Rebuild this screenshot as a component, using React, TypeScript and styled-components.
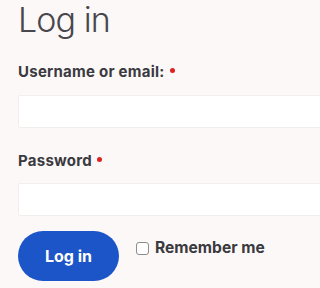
import React from 'react';
import styled, { createGlobalStyle } from 'styled-components';

const TEXT = '#3a3a3f';
const BLUE = '#1b55c7';
const BG = '#fcf8f7';

const GlobalStyle = createGlobalStyle`
  html, body {
    margin: 0;
    padding: 0;
    background: ${BG};
    overflow: hidden;
  }
  body {
    font-family: Inter, "Open Sans", Arial, sans-serif;
  }
`;

const Page = styled.main`
  width: 100%;
  height: 288px;
  padding-left: 18px;
  box-sizing: border-box;
  background: ${BG};
  overflow: hidden;
`;

const Title = styled.h1`
  margin: 0;
  font-size: 34px;
  line-height: 40px;
  font-weight: 300;
  color: #47474c;
  letter-spacing: -0.9px;
`;

const Field = styled.div<{ $gap: number }>`
  display: flex;
  flex-direction: column;
  margin-top: ${(p) => p.$gap}px;
`;

const Label = styled.label`
  display: flex;
  align-items: flex-start;
  font-size: 15px;
  line-height: 20px;
  font-weight: 700;
  letter-spacing: 0.25px;
  color: ${TEXT};
`;

const Required = styled.span`
  width: 5px;
  height: 5px;
  border-radius: 50%;
  background: #dd2222;
  margin: 6px 0 0 5px;
`;

const Input = styled.input<{ $top: number }>`
  margin-top: ${(p) => p.$top}px;
  width: calc(100% + 40px);
  height: 33px;
  box-sizing: border-box;
  border: 1px solid #f2eeec;
  border-radius: 2px;
  background: #ffffff;
  outline: none;
`;

const Actions = styled.div`
  display: flex;
  align-items: flex-start;
  gap: 17px;
  margin-top: 15px;
`;

const Button = styled.button`
  width: 101px;
  height: 50px;
  border: none;
  border-radius: 25px;
  background: ${BLUE};
  color: #ffffff;
  font-family: inherit;
  font-size: 16px;
  font-weight: 700;
  padding: 0;
`;

const Remember = styled.label`
  display: flex;
  align-items: center;
  gap: 6px;
  margin-top: 7px;
  font-size: 15.6px;
  line-height: 20px;
  font-weight: 700;
  color: ${TEXT};
`;

const Check = styled.input`
  appearance: none;
  margin: 0;
  width: 13px;
  height: 13px;
  box-sizing: border-box;
  border: 1px solid #8c8c8c;
  border-radius: 3px;
  background: #ffffff;
`;

export default function App() {
  return (
    <Page>
      <GlobalStyle />
      <Title>Log in</Title>
      <Field $gap={22}>
        <Label>
          Username or email:
          <Required />
        </Label>
        <Input type="text" $top={13} />
      </Field>
      <Field $gap={23}>
        <Label>
          Password
          <Required />
        </Label>
        <Input type="password" $top={12} />
      </Field>
      <Actions>
        <Button>Log in</Button>
        <Remember>
          <Check type="checkbox" />
          Remember me
        </Remember>
      </Actions>
    </Page>
  );
}
